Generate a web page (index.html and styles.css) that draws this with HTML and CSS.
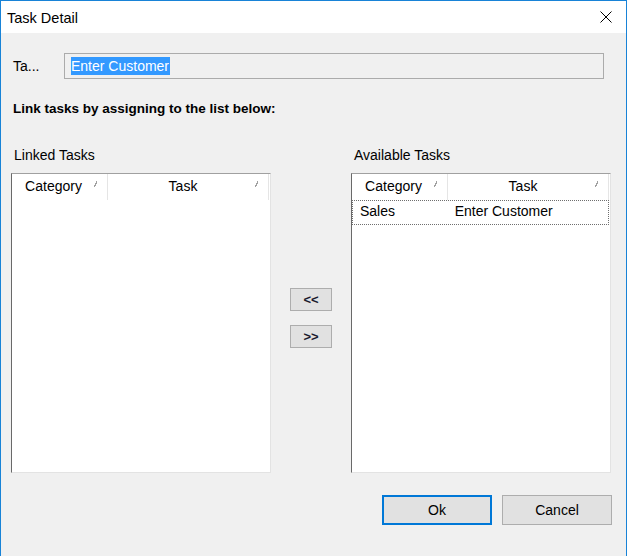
FILE: index.html
```html
<!DOCTYPE html>
<html>
<head>
<meta charset="utf-8">
<link rel="stylesheet" href="styles.css">
</head>
<body>
<div class="window">
  <div class="titlebar">
    <span class="title">Task Detail</span>
    <svg class="close" width="12" height="12" viewBox="0 0 12 12"><path d="M0.5 0.5 L11.5 11.5 M11.5 0.5 L0.5 11.5" stroke="#000" stroke-width="1" fill="none"/></svg>
  </div>
  <div class="body">
    <div class="task-row">
      <span class="task-label">Ta...</span>
      <div class="textbox"><span class="sel">Enter Customer</span></div>
    </div>
    <div class="instr">Link tasks by assigning to the list below:</div>
    <div class="lists">
      <div class="panel">
        <div class="panel-title">Linked Tasks</div>
        <div class="listview">
          <div class="lv-header">
            <div class="hcell c1">Category<span class="sort"></span></div>
            <div class="hcell c2">Task<span class="sort"></span></div>
          </div>
        </div>
      </div>
      <div class="movers">
        <button class="mv">&lt;&lt;</button>
        <button class="mv">&gt;&gt;</button>
      </div>
      <div class="panel">
        <div class="panel-title">Available Tasks</div>
        <div class="listview">
          <div class="lv-header">
            <div class="hcell c1">Category<span class="sort"></span></div>
            <div class="hcell c2">Task<span class="sort"></span></div>
          </div>
          <div class="lv-row focused">
            <div class="cell c1">Sales</div>
            <div class="cell c2">Enter Customer</div>
          </div>
        </div>
      </div>
    </div>
    <div class="footer">
      <button class="btn ok">Ok</button>
      <button class="btn">Cancel</button>
    </div>
  </div>
</div>
</body>
</html>
```
FILE: styles.css
```css
* { box-sizing: border-box; }
html, body { margin: 0; padding: 0; }
body {
  font-family: "Liberation Sans", Arial, sans-serif;
  font-size: 14px;
  color: #000;
  background: #f0f0f0;
}
.window {
  width: 627px;
  height: 556px;
  border: 1px solid #1883d7;
  border-bottom: none;
  background: #f0f0f0;
  display: flex;
  flex-direction: column;
}
.titlebar {
  height: 32px;
  background: #fff;
  display: flex;
  align-items: center;
  justify-content: space-between;
  padding: 0 14px 0 6px;
}
.title { font-size: 14.5px; line-height: 18px; margin-top: 1px; }
.close { display: block; margin-top: 0; }
.body {
  flex: 1;
  padding: 20px 0 0 12px;
  display: flex;
  flex-direction: column;
}
.task-row {
  display: flex;
  align-items: center;
  height: 26px;
}
.task-label { width: 51px; line-height: 18px; }
.textbox {
  width: 540px;
  height: 26px;
  border: 1px solid #ababab;
  background: #f0f0f0;
  padding: 3px 0 0 6px;
}
.sel {
  display: inline-block;
  background: #3399ff;
  color: #fff;
  line-height: 18px;
  height: 18px;
  padding-right: 1px;
}
.instr {
  margin-top: 21px;
  font-weight: bold;
  font-size: 13.5px;
  line-height: 18px;
}
.lists {
  margin-top: 28px;
  display: grid;
  grid-template-columns: 260px 80px 260px;
  margin-left: -2px;
}
.panel { display: flex; flex-direction: column; }
.panel-title { line-height: 18px; padding-left: 3px; margin-bottom: 9px; }
.listview {
  height: 300px;
  background: #fff;
  border-style: solid;
  border-width: 1px;
  border-color: #a0a0a0 #e3e3e3 #e3e3e3 #696969;
}
.lv-header { display: flex; height: 26px; }
.hcell {
  position: relative;
  height: 26px;
  line-height: 25px;
  text-align: center;
  border-right: 1px solid #e5e5e5;
}
.hcell.c1 { width: 96px; padding-right: 12px; }
.hcell.c2 { width: 161px; padding-right: 10px; }
.sort {
  position: absolute;
  right: 10px;
  top: 7px;
  width: 3px;
  height: 6px;
  background: linear-gradient(to bottom right, transparent 40%, #a0a0a0 40%, #a0a0a0 64%, transparent 64%);
}
.lv-row {
  display: flex;
  height: 25px;
  line-height: 21px;
}
.lv-row.focused { border: 1px dotted #6f6f6f; margin-right: 1px; }
.cell.c1 { width: 95px; padding-left: 7px; }
.cell.c2 { width: 161px; padding-left: 7px; }
.movers {
  display: flex;
  flex-direction: column;
  align-items: center;
  padding-top: 142px;
  gap: 14px;
}
.mv {
  width: 42px;
  height: 23px;
  background: #e1e1e1;
  border: 1px solid #adadad;
  font-family: "Liberation Sans", Arial, sans-serif;
  font-weight: bold;
  font-size: 13px;
  color: #1a1a2e;
  padding: 0;
  line-height: 20px;
}
.footer {
  margin-top: 22px;
  display: flex;
  justify-content: flex-end;
  gap: 10px;
  padding-right: 14px;
}
.btn {
  width: 110px;
  height: 30px;
  background: #e1e1e1;
  border: 1px solid #adadad;
  font-family: "Liberation Sans", Arial, sans-serif;
  font-size: 14px;
  color: #000;
  padding: 0;
}
.btn.ok { border: 2px solid #0078d7; }
```
